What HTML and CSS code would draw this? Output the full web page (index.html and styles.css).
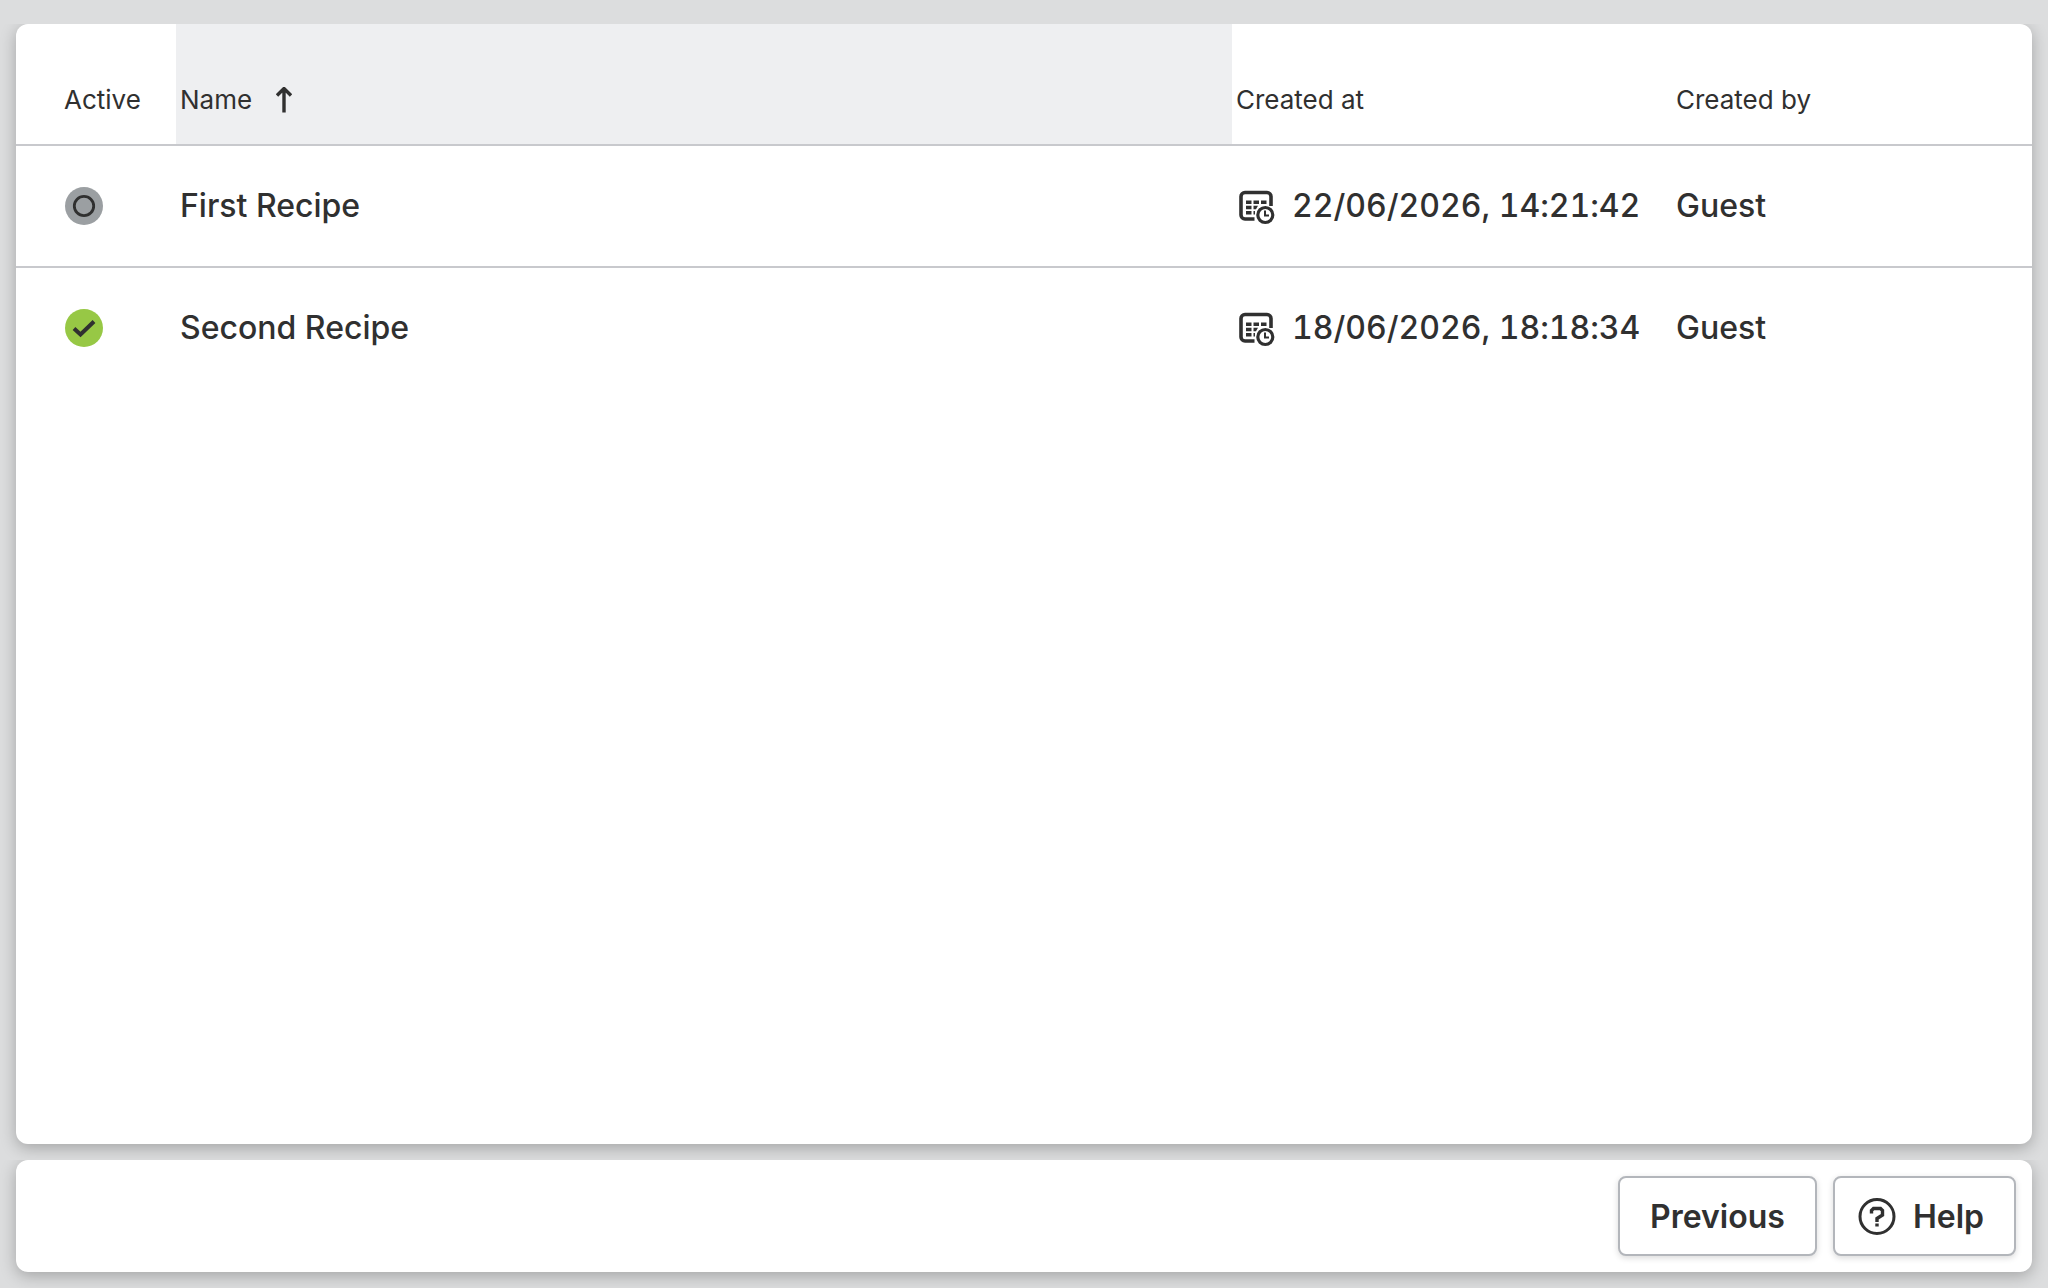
FILE: index.html
```html
<!DOCTYPE html>
<html lang="en">
  <head>
    <meta charset="UTF-8" />
    <meta name="viewport" content="width=device-width, initial-scale=1.0" />
    <title>Recipes</title>
    <link rel="stylesheet" href="styles.css">
  </head>
  <body>
    <!-- Shared icons -->
    <svg class="icon-defs" aria-hidden="true">
      <symbol id="icon-date-time" viewBox="0 0 40 40">
        <path d="M35 20V10.500a4 4 0 0 0-4-4H9a4 4 0 0 0-4 4v18.500a4 4 0 0 0 4 4H18.500" fill="none" stroke="currentColor" stroke-width="3.600" />
        <path d="M10 14.500h5.500v3.500H10zM17.500 14.500H23v3.500h-5.500zM25 14.500h5.500v3.500H25zM10 19.800h5.500v3.400H10zM17.500 19.800H22l-2 3.400h-2.500zM10 25h5.500v3.500H10zM17.500 25H19v3.500h-1.500z" fill="currentColor" />
        <circle cx="29.300" cy="29" r="7.500" fill="none" stroke="currentColor" stroke-width="3.200" />
        <path d="M29 24.500V29.500h4" fill="none" stroke="currentColor" stroke-width="2" />
      </symbol>
    </svg>

    <main class="panel">
      <table class="recipes">
        <thead>
          <tr>
            <th class="col-active">Active</th>
            <th class="col-name" aria-sort="ascending">
              <button type="button" class="sort-button">
                Name
                <svg class="sort-icon" viewBox="0 0 16 26" aria-hidden="true">
                  <path d="M8 25.500V2M1 8.500l7-7 7 7" fill="none" stroke="currentColor" stroke-width="3.400" />
                </svg>
              </button>
            </th>
            <th class="col-created-at">Created at</th>
            <th class="col-created-by">Created by</th>
          </tr>
        </thead>
        <tbody>
          <tr>
            <td class="col-active">
              <svg class="status-icon" viewBox="0 0 40 40" role="img" aria-label="Inactive">
                <circle cx="20" cy="20" r="19" fill="#9b9fa2" />
                <circle cx="20" cy="20" r="9.700" fill="none" stroke="#303030" stroke-width="2.800" />
              </svg>
            </td>
            <td>First Recipe</td>
            <td>
              <div class="date">
                <svg class="date-icon" aria-hidden="true"><use href="#icon-date-time" /></svg>
                <time datetime="2026-06-22T14:21:42">22/06/2026, 14:21:42</time>
              </div>
            </td>
            <td>Guest</td>
          </tr>
          <tr>
            <td class="col-active">
              <svg class="status-icon" viewBox="0 0 40 40" role="img" aria-label="Active">
                <circle cx="20" cy="20" r="19" fill="#97c845" />
                <path d="M10 20.500l6.500 6L30 13.500" fill="none" stroke="#303030" stroke-width="4" />
              </svg>
            </td>
            <td>Second Recipe</td>
            <td>
              <div class="date">
                <svg class="date-icon" aria-hidden="true"><use href="#icon-date-time" /></svg>
                <time datetime="2026-06-18T18:18:34">18/06/2026, 18:18:34</time>
              </div>
            </td>
            <td>Guest</td>
          </tr>
        </tbody>
      </table>
    </main>

    <footer class="panel actions">
      <button type="button" class="button">Previous</button>
      <button type="button" class="button help-button">
        <svg class="help-icon" viewBox="0 0 38 38" aria-hidden="true">
          <circle cx="19" cy="18.500" r="17" fill="none" stroke="currentColor" stroke-width="3" />
          <path d="M13.500 15.500v-3l2-2h7l2 2v4.500L19 20.500V24M19 25.500v3" fill="none" stroke="currentColor" stroke-width="3.400" />
        </svg>
        Help
      </button>
    </footer>
  </body>
</html>
```

FILE: styles.css
```css
* {
  box-sizing: border-box;
}

body {
  display: flex;
  flex-direction: column;
  gap: 16px;
  min-height: 100vh;
  margin: 0;
  padding: 24px 16px 16px;
  font-family: Inter, sans-serif;
  font-size: 32px;
  font-weight: 500;
  line-height: 40px;
  color: #303030;
  background-color: #dcddde;
}

.icon-defs {
  display: none;
}

/* the shadow falls to the sides and below only */
.panel {
  background-color: white;
  border-radius: 12px;
  box-shadow: 0 4px 16px rgba(0, 0, 0, 0.26);
  clip-path: inset(0 -32px -32px);
}

main.panel {
  flex: 1;
  overflow: hidden;
}

.recipes {
  width: 100%;
  table-layout: fixed;
  border-spacing: 0;
}

th,
td {
  padding: 40px 4px;
  text-align: left;
}

th {
  padding: 60px 4px 28px;
  font-size: 26px;
  font-weight: 400;
  line-height: 32px;
}

th,
tr:not(:last-child) td {
  border-bottom: 2px solid #c8c9cd;
}

.col-active {
  width: 160px;
  padding-left: 48px;
}

th.col-name {
  background-color: #eeeff1;
}

.col-created-at {
  width: 440px;
}

.col-created-by {
  width: 360px;
}

.sort-button {
  display: flex;
  align-items: center;
  gap: 24px;
  padding: 0;
  border: none;
  font: inherit;
  color: inherit;
  background: none;
  cursor: pointer;
}

.sort-icon {
  width: 16px;
  height: 26px;
}

.status-icon {
  display: block;
  width: 40px;
  height: 40px;
}

.date {
  display: flex;
  align-items: center;
  gap: 16px;
  font-variant-numeric: tabular-nums;
  font-variant-ligatures: no-contextual;
  white-space: nowrap;
}

.date-icon {
  width: 40px;
  height: 40px;
}

.actions {
  display: flex;
  justify-content: flex-end;
  gap: 16px;
  padding: 16px;
}

.button {
  display: flex;
  align-items: center;
  gap: 17px;
  height: 80px;
  padding: 1px 30px 0;
  border: 2px solid #b3b6bb;
  border-radius: 8px;
  font: inherit;
  font-weight: 600;
  color: inherit;
  background-color: white;
  box-shadow: 0 2px 6px rgba(0, 0, 0, 0.15);
  cursor: pointer;
}

.help-button {
  padding-left: 23px;
}

.help-icon {
  width: 38px;
  height: 38px;
}
```
